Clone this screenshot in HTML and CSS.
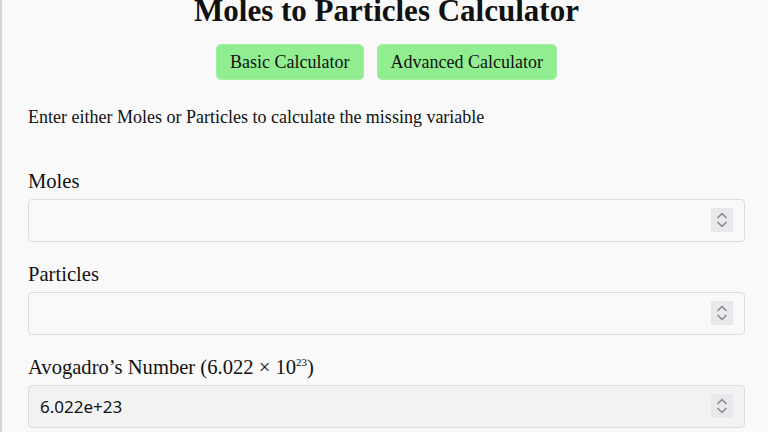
FILE: index.html
```html
<!DOCTYPE html>
<html lang="en">
<head>
  <meta charset="UTF-8">
  <title>Moles to Particles Calculator</title>
  <link rel="stylesheet" href="styles.css">
</head>
<body>

  <div class="calculator">
    <h1>Moles to Particles Calculator</h1>

    <div class="tabs">
      <button type="button" class="tab">Basic Calculator</button>
      <button type="button" class="tab">Advanced Calculator</button>
    </div>

    <p class="intro">Enter either Moles or Particles to calculate the missing variable</p>

    <!-- Campos -->
    <div class="field first">
      <label for="moles">Moles</label>
      <div class="input-wrap">
        <input type="text" id="moles">
        <span class="spin">
          <svg width="12" height="20" viewBox="0 0 12 20"><path d="M1.5 8 L6 3.5 L10.5 8 M1.5 12 L6 16.5 L10.5 12" fill="none" stroke="#85858f" stroke-width="1.5"/></svg>
        </span>
      </div>
    </div>

    <div class="field">
      <label for="particles">Particles</label>
      <div class="input-wrap">
        <input type="text" id="particles">
        <span class="spin">
          <svg width="12" height="20" viewBox="0 0 12 20"><path d="M1.5 8 L6 3.5 L10.5 8 M1.5 12 L6 16.5 L10.5 12" fill="none" stroke="#85858f" stroke-width="1.5"/></svg>
        </span>
      </div>
    </div>

    <div class="field">
      <label for="avogadro">Avogadro’s Number (6.022 × 10<sup>23</sup>)</label>
      <div class="input-wrap">
        <input type="text" id="avogadro" class="readonly" value="6.022e+23" readonly>
        <span class="spin">
          <svg width="12" height="20" viewBox="0 0 12 20"><path d="M1.5 8 L6 3.5 L10.5 8 M1.5 12 L6 16.5 L10.5 12" fill="none" stroke="#85858f" stroke-width="1.5"/></svg>
        </span>
      </div>
    </div>
  </div>

</body>
</html>
```

FILE: styles.css
```css
body {
  margin: 0;
  font-family: 'Liberation Serif', 'Times New Roman', serif;
  background-color: #f9f9f9;
  color: #111;
}

.calculator {
  border-left: 2px solid #d4d4d4;
  padding: 0 23px 20px 26px;
  min-height: 432px;
  box-sizing: border-box;
}

h1 {
  font-size: 31px;
  line-height: 26px;
  margin: -2px 0 0 0;
  text-align: center;
}

.tabs {
  display: flex;
  justify-content: center;
  gap: 13px;
  margin-top: 20px;
}

.tab {
  font-family: 'Liberation Serif', 'Times New Roman', serif;
  font-size: 18px;
  color: #111;
  background-color: #90ee90;
  border: 1px solid #a6eea6;
  border-radius: 5px;
  padding: 6px 13px;
  line-height: 22px;
  cursor: pointer;
}

.intro {
  font-size: 18px;
  margin: 25px 0 0 0;
  line-height: 24px;
}

.field {
  margin-top: 20px;
}

.field.first {
  margin-top: 40px;
}

label {
  display: block;
  font-size: 20.6px;
  line-height: 24px;
  margin-bottom: 6px;
}

label sup {
  font-size: 11px;
  line-height: 0;
}

.input-wrap {
  position: relative;
}

input[type="text"] {
  display: block;
  width: 100%;
  box-sizing: border-box;
  height: 43px;
  padding: 0 11px;
  font-family: 'Noto Sans', 'Open Sans', sans-serif;
  font-size: 17px;
  color: #111;
  background-color: #f9f9f9;
  border: 1px solid #d6dde7;
  border-radius: 4px;
  outline: none;
}

input.readonly {
  background-color: #f2f2f2;
  border-color: #dcdcdc;
}

.spin {
  position: absolute;
  right: 12px;
  top: 9px;
  width: 22px;
  height: 24px;
  background-color: #e9e9ed;
  display: flex;
  align-items: center;
  justify-content: center;
}
```
